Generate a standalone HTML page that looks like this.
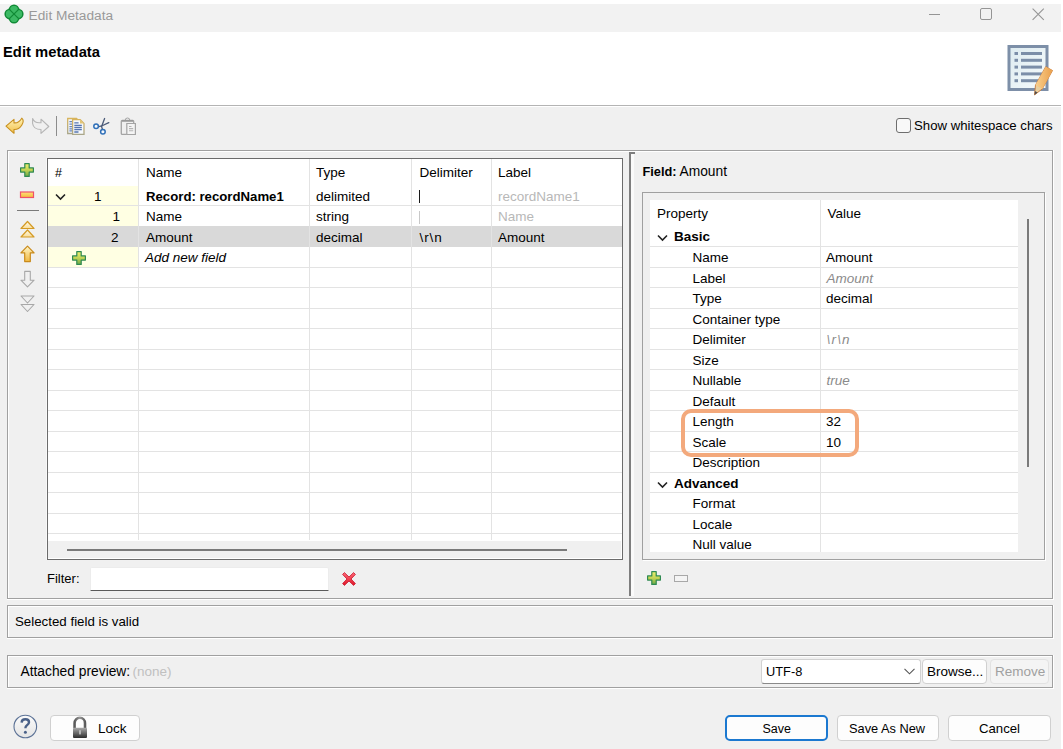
<!DOCTYPE html>
<html><head><meta charset="utf-8">
<style>
*{margin:0;padding:0;box-sizing:border-box}
html,body{width:1063px;height:749px;overflow:hidden;background:#fff;font-family:"Liberation Sans",sans-serif;color:#000}
.a{position:absolute}
.t{position:absolute;white-space:pre;line-height:16px}
svg{position:absolute;overflow:visible}
</style></head><body>
<div class="a" style="left:0px;top:4px;width:1061px;height:28px;background:#f2f2f2"></div><svg style="left:4px;top:4px" width="20" height="20" viewBox="0 0 20 20">
<g stroke="#118a36" stroke-width="1.6" fill="#3cb964"><circle cx="10" cy="5.7" r="4.5"/><circle cx="14.3" cy="10" r="4.5"/><circle cx="10" cy="14.3" r="4.5"/><circle cx="5.7" cy="10" r="4.5"/></g>
<g fill="#3cb964"><circle cx="10" cy="5.7" r="3.7"/><circle cx="14.3" cy="10" r="3.7"/><circle cx="10" cy="14.3" r="3.7"/><circle cx="5.7" cy="10" r="3.7"/><rect x="5.5" y="5.5" width="9" height="9"/></g>
<path d="M4.6 4.6L15.4 15.4M15.4 4.6L4.6 15.4" stroke="#118a36" stroke-width="1.3"/>
</svg><div class="t" style="left:28.6px;top:8px;font-size:13.7px;font-weight:normal;font-style:normal;color:#999;">Edit Metadata</div><div class="a" style="left:929px;top:14px;width:11px;height:1px;background:#959595"></div><div class="a" style="left:980px;top:8px;width:12px;height:12px;border:1.3px solid #959595;border-radius:2px"></div><svg style="left:1032px;top:8px" width="13" height="13" viewBox="0 0 13 13"><path d="M0.6 0.6L11.8 11.8M11.8 0.6L0.6 11.8" stroke="#959595" stroke-width="1.1"/></svg><div class="t" style="left:3px;top:44px;font-size:14.8px;font-weight:bold;font-style:normal;color:#000;">Edit metadata</div><svg style="left:1006px;top:44px" width="50" height="54" viewBox="0 0 50 54">
<defs><linearGradient id="pg" x1="0" y1="0" x2="1" y2="1"><stop offset="0" stop-color="#ddebf0"/><stop offset="1" stop-color="#f6fbfc"/></linearGradient>
<linearGradient id="pc" x1="0" y1="0" x2="1" y2="0"><stop offset="0" stop-color="#f9d08e"/><stop offset="1" stop-color="#eaa04c"/></linearGradient></defs>
<rect x="3" y="2.5" width="38" height="43" fill="url(#pg)" stroke="#7d8fa8" stroke-width="3"/>
<g fill="#7b8ea8">
<rect x="8.5" y="8" width="3.5" height="3"/><rect x="15" y="8" width="21" height="3"/>
<rect x="8.5" y="14.8" width="3.5" height="3"/><rect x="15" y="14.8" width="21" height="3"/>
<rect x="8.5" y="21.6" width="3.5" height="3"/><rect x="15" y="21.6" width="21" height="3"/>
<rect x="8.5" y="28.4" width="3.5" height="3"/><rect x="15" y="28.4" width="21" height="3"/>
<rect x="8.5" y="35.2" width="3.5" height="3"/><rect x="15" y="35.2" width="21" height="3"/>
</g>
<path d="M39.7 22.7L46.5 26.5 36.3 44.9 28.5 50.9 29.5 41.1z" fill="#e9cf9e" stroke="#c8783a" stroke-width="0.9" stroke-linejoin="round"/>
<path d="M39.7 22.7L46.5 26.5 36.3 44.9 29.5 41.1z" fill="url(#pc)"/>
<path d="M28.9 47L31.6 48.5 28.5 50.9z" fill="#505050"/>
</svg><div class="a" style="left:0px;top:105px;width:1061px;height:1px;background:#b4b4b4"></div><div class="a" style="left:0px;top:107px;width:1061px;height:642px;background:#f0f0f0"></div><svg style="left:5px;top:117px" width="20" height="18" viewBox="0 0 20 18">
<defs><linearGradient id="ug" x1="0" y1="0" x2="0" y2="1"><stop offset="0" stop-color="#fff3b8"/><stop offset="1" stop-color="#f2c04a"/></linearGradient></defs>
<path d="M1 9.2L9 2.4 9 5.9 10 5.9C13 5.9 15 4 16.8 1.2 18.4 2.4 18.4 5.4 16.7 8.2 15 10.9 12 12.5 9.6 12.5L9 12.5 9 16.3z" fill="url(#ug)" stroke="#c8901e" stroke-width="1.1" stroke-linejoin="round"/>
</svg><svg style="left:31px;top:117px" width="20" height="18" viewBox="0 0 20 18">
<path d="M1.6 1.5C2.8 4.2 5 5.7 8 5.7L10 5.7 10 2.2 17.8 9.5 10 16.3 10 12.5C6 12.5 2.2 10.5 1.6 6.5z" fill="none" stroke="#b5b5b5" stroke-width="1.1" stroke-linejoin="round"/>
</svg><div class="a" style="left:56px;top:116px;width:1px;height:20px;background:#8c8c8c"></div><svg style="left:66px;top:117px" width="20" height="19" viewBox="0 0 20 19">
<defs><linearGradient id="cb" x1="0" y1="0" x2="0" y2="1"><stop offset="0" stop-color="#d8b45c"/><stop offset="1" stop-color="#a9a68a"/></linearGradient></defs>
<path d="M1.7 1.5H10.5L12 3V16.5H1.7z" fill="#f2f6fc" stroke="url(#cb)" stroke-width="1.3"/>
<g stroke="#6a86bc" stroke-width="1.2"><path d="M3.4 4.6H6.2M3.4 7.2H6.2M3.4 9.6H6.2M3.4 11.8H6.2M3.4 13.8H6.2"/></g>
<path d="M6.6 2.6H14.2L18 6.4V17.4H6.6z" fill="#f6f9fd" stroke="url(#cb)" stroke-width="1.3"/>
<path d="M14 2.8V6.6H17.8z" fill="#e2c474"/>
<g stroke="#5675b0" stroke-width="1.3"><path d="M8.3 5.8H12.6M8.3 8.3H15.8M8.3 10.5H15.8M8.3 12.6H15.8M8.3 15H12.5"/></g>
</svg><svg style="left:92px;top:117px" width="19" height="19" viewBox="0 0 19 19">
<g stroke="#4a5a78" stroke-width="1.3" fill="none" stroke-linecap="round"><path d="M12.6 1.5L9.6 9.6 10.4 12.2"/><path d="M16.8 5.6L9.6 9 6.8 9.6"/></g>
<g stroke="#2f6fb8" stroke-width="1.5" fill="#f4f8fc"><circle cx="4.1" cy="9.3" r="2.3"/><circle cx="10.9" cy="14.8" r="2.3"/></g>
</svg><svg style="left:120px;top:117px" width="18" height="19" viewBox="0 0 18 19">
<g fill="none" stroke="#a4a4a4" stroke-width="1.3">
<path d="M6.7 17.4H2.2Q1.3 17.4 1.3 16.5V4.4Q1.3 3.5 2.2 3.5H12.8Q13.7 3.5 13.7 4.4V6.4"/>
<path d="M5.2 3.2Q5.2 1 7.5 1Q9.8 1 9.8 3.2" stroke-width="1"/>
</g>
<path d="M2 3.9H13" stroke="#999" stroke-width="1.6"/>
<path d="M6.8 6.5H15.4V17.5H6.8z" fill="#f4f4f4" stroke="#a4a4a4" stroke-width="1.2"/>
<path d="M9 9.5H11.5M9 11.6H13.2M9 13.7H13.2" stroke="#b4b4b4" stroke-width="1.1"/>
</svg><div class="a" style="left:896px;top:118px;width:15px;height:15px;border:1.3px solid #6e6e6e;border-radius:3px;background:#f8f8f8"></div><div class="t" style="left:914px;top:118px;font-size:13.2px;font-weight:normal;font-style:normal;color:#000;">Show whitespace chars</div><div class="a" style="left:7px;top:150px;width:1046px;height:1px;background:#a0a0a0"></div><div class="a" style="left:7px;top:598px;width:1046px;height:1px;background:#a0a0a0"></div><div class="a" style="left:7px;top:150px;width:1px;height:449px;background:#a0a0a0"></div><div class="a" style="left:1052px;top:150px;width:1px;height:449px;background:#a0a0a0"></div><div class="a" style="left:8px;top:151px;width:1044px;height:1px;background:#fff"></div><div class="a" style="left:8px;top:151px;width:1px;height:447px;background:#fff"></div><div class="a" style="left:7px;top:599px;width:1047px;height:1px;background:#fff"></div><div class="a" style="left:1053px;top:150px;width:1px;height:450px;background:#fff"></div><svg style="left:20px;top:163px" width="14" height="14" viewBox="0 0 14 14">
<defs><linearGradient id="plg20" x1="0" y1="0" x2="0" y2="1"><stop offset="0" stop-color="#eef070"/><stop offset="0.5" stop-color="#c4d454"/><stop offset="1" stop-color="#6aa848"/></linearGradient></defs>
<path transform="translate(0 0)" d="M4.8 0.6H9.2V4.9H13.4V9.1H9.2V13.4H4.8V9.1H0.6V4.9H4.8z" fill="url(#plg20)" stroke="#2f8a52" stroke-width="1.2" stroke-linejoin="round"/>
</svg><svg style="left:19px;top:191px" width="16" height="8" viewBox="0 0 16 8">
<defs><linearGradient id="mg" x1="0" y1="0" x2="0" y2="1"><stop offset="0" stop-color="#ffe27a"/><stop offset="1" stop-color="#f5b73c"/></linearGradient></defs>
<rect x="1.5" y="1" width="13" height="5.5" fill="url(#mg)" stroke="#f0506a" stroke-width="1.2"/></svg><div class="a" style="left:17px;top:210px;width:22px;height:1px;background:#7a7a7a"></div><svg style="left:20px;top:220px" width="16" height="20" viewBox="0 0 16 20">
<defs><linearGradient id="tg" x1="0" y1="0" x2="0" y2="1"><stop offset="0" stop-color="#fffbe8"/><stop offset="1" stop-color="#f8dc98"/></linearGradient></defs><g transform="translate(-0.5 0)">
<path d="M8 1.5L14.5 8.5H1.5z" fill="url(#tg)" stroke="#d49a24" stroke-width="1.2" stroke-linejoin="round"/><path d="M8 10L14.5 17H1.5z" fill="url(#tg)" stroke="#d49a24" stroke-width="1.2" stroke-linejoin="round"/></g></svg><svg style="left:20px;top:245px" width="16" height="18" viewBox="0 0 16 18">
<defs><linearGradient id="ag" x1="0" y1="0" x2="0" y2="1"><stop offset="0" stop-color="#fff6c8"/><stop offset="1" stop-color="#f0b840"/></linearGradient></defs><g transform="translate(-0.5 0)">
<path d="M8 1.2L14.6 7.8H10.8V16.6H5.2V7.8H1.4z" fill="url(#ag)" stroke="#c98a1a" stroke-width="1.2" stroke-linejoin="round"/></g></svg><svg style="left:20px;top:270px" width="16" height="18" viewBox="0 0 16 18"><g transform="translate(-0.5 0)">
<path d="M8 16.8L14.6 10.2H10.8V1.4H5.2V10.2H1.4z" fill="none" stroke="#a8a8a8" stroke-width="1.1" stroke-linejoin="round"/></g></svg><svg style="left:20px;top:294px" width="16" height="20" viewBox="0 0 16 20"><g transform="translate(-0.5 0)">
<path d="M8 9L14.5 2H1.5z M8 17.5L14.5 10.5H1.5z" fill="none" stroke="#a8a8a8" stroke-width="1.1" stroke-linejoin="round"/></g></svg><div class="a" style="left:47px;top:158px;width:576px;height:402px;background:#fff;border:1px solid #6b6b6b;box-shadow:-1px 0 0 #f8f8f8"></div><div class="a" style="left:48px;top:541px;width:574px;height:17px;background:#f0f0f0"></div><div class="a" style="left:67px;top:549px;width:500px;height:2px;background:#7a7a7a"></div><div class="a" style="left:48px;top:558px;width:574px;height:1px;background:#fff"></div><div class="a" style="left:621px;top:541px;width:1px;height:18px;background:#fff"></div><div class="a" style="left:48px;top:186px;width:90px;height:19px;background:#ffffe3"></div><div class="a" style="left:48px;top:206px;width:90px;height:20px;background:#ffffe3"></div><div class="a" style="left:48px;top:247px;width:90px;height:20px;background:#ffffe3"></div><div class="a" style="left:48px;top:226px;width:574px;height:21px;background:#d9d9d9"></div><div class="a" style="left:48px;top:205px;width:574px;height:1px;background:#e3e3e3"></div><div class="a" style="left:48px;top:267px;width:574px;height:1px;background:#e3e3e3"></div><div class="a" style="left:48px;top:287px;width:574px;height:1px;background:#e3e3e3"></div><div class="a" style="left:48px;top:308px;width:574px;height:1px;background:#e3e3e3"></div><div class="a" style="left:48px;top:328px;width:574px;height:1px;background:#e3e3e3"></div><div class="a" style="left:48px;top:349px;width:574px;height:1px;background:#e3e3e3"></div><div class="a" style="left:48px;top:369px;width:574px;height:1px;background:#e3e3e3"></div><div class="a" style="left:48px;top:390px;width:574px;height:1px;background:#e3e3e3"></div><div class="a" style="left:48px;top:410px;width:574px;height:1px;background:#e3e3e3"></div><div class="a" style="left:48px;top:431px;width:574px;height:1px;background:#e3e3e3"></div><div class="a" style="left:48px;top:451px;width:574px;height:1px;background:#e3e3e3"></div><div class="a" style="left:48px;top:472px;width:574px;height:1px;background:#e3e3e3"></div><div class="a" style="left:48px;top:492px;width:574px;height:1px;background:#e3e3e3"></div><div class="a" style="left:48px;top:513px;width:574px;height:1px;background:#e3e3e3"></div><div class="a" style="left:48px;top:533px;width:574px;height:1px;background:#e3e3e3"></div><div class="a" style="left:138px;top:159px;width:1px;height:381px;background:#e3e3e3"></div><div class="a" style="left:309px;top:159px;width:1px;height:381px;background:#e3e3e3"></div><div class="a" style="left:411px;top:159px;width:1px;height:381px;background:#e3e3e3"></div><div class="a" style="left:491px;top:159px;width:1px;height:381px;background:#e3e3e3"></div><div class="t" style="left:55px;top:165px;font-size:12.5px;font-weight:normal;font-style:normal;color:#000;">#</div><div class="t" style="left:146px;top:165px;font-size:13.5px;font-weight:normal;font-style:normal;color:#000;">Name</div><div class="t" style="left:316px;top:165px;font-size:13.5px;font-weight:normal;font-style:normal;color:#000;">Type</div><div class="t" style="left:419.5px;top:165px;font-size:13.5px;font-weight:normal;font-style:normal;color:#000;">Delimiter</div><div class="t" style="left:498px;top:165px;font-size:13.5px;font-weight:normal;font-style:normal;color:#000;">Label</div><svg style="left:55px;top:193px" width="11" height="8" viewBox="0 0 11 8"><path d="M1 1.5L5.5 6 10 1.5" fill="none" stroke="#222" stroke-width="1.6"/></svg><div class="t" style="left:94px;top:189px;font-size:13.5px;font-weight:normal;font-style:normal;color:#000;">1</div><div class="t" style="left:146px;top:189px;font-size:13.2px;font-weight:bold;font-style:normal;color:#000;">Record: recordName1</div><div class="t" style="left:316px;top:189px;font-size:13.5px;font-weight:normal;font-style:normal;color:#000;">delimited</div><div class="a" style="left:419px;top:190px;width:1.3px;height:13px;background:#1a1a1a"></div><div class="t" style="left:498px;top:189px;font-size:13.5px;font-weight:normal;font-style:normal;color:#b8b8b8;">recordName1</div><div class="t" style="left:112.5px;top:209px;font-size:13.5px;font-weight:normal;font-style:normal;color:#000;">1</div><div class="t" style="left:146px;top:209px;font-size:13.5px;font-weight:normal;font-style:normal;color:#000;">Name</div><div class="t" style="left:316px;top:209px;font-size:13.5px;font-weight:normal;font-style:normal;color:#000;">string</div><div class="a" style="left:419px;top:211px;width:1px;height:13px;background:#c8c8c8"></div><div class="t" style="left:498px;top:209px;font-size:13.5px;font-weight:normal;font-style:normal;color:#b8b8b8;">Name</div><div class="t" style="left:111px;top:230px;font-size:13.5px;font-weight:normal;font-style:normal;color:#000;">2</div><div class="t" style="left:146px;top:230px;font-size:13.5px;font-weight:normal;font-style:normal;color:#000;">Amount</div><div class="t" style="left:316px;top:230px;font-size:13.5px;font-weight:normal;font-style:normal;color:#000;">decimal</div><div class="t" style="left:419.5px;top:230px;font-size:13.5px;font-weight:normal;font-style:normal;color:#000;letter-spacing:0.9px">\r\n</div><div class="t" style="left:498px;top:230px;font-size:13.5px;font-weight:normal;font-style:normal;color:#000;">Amount</div><svg style="left:72px;top:251px" width="14" height="14" viewBox="0 0 14 14">
<defs><linearGradient id="plg72" x1="0" y1="0" x2="0" y2="1"><stop offset="0" stop-color="#eef070"/><stop offset="0.5" stop-color="#c4d454"/><stop offset="1" stop-color="#6aa848"/></linearGradient></defs>
<path transform="translate(0 0)" d="M4.8 0.6H9.2V4.9H13.4V9.1H9.2V13.4H4.8V9.1H0.6V4.9H4.8z" fill="url(#plg72)" stroke="#2f8a52" stroke-width="1.2" stroke-linejoin="round"/>
</svg><div class="t" style="left:145px;top:250px;font-size:13.5px;font-weight:normal;font-style:italic;color:#000;">Add new field</div><div class="t" style="left:47px;top:571px;font-size:13px;font-weight:normal;font-style:normal;color:#000;">Filter:</div><div class="a" style="left:90px;top:567px;width:239px;height:24px;background:#fff;border:1px solid #ececec;border-bottom:1px solid #5a5a5a;border-radius:2px 2px 0 0"></div><svg style="left:341px;top:571px" width="16" height="16" viewBox="0 0 16 16">
<defs><linearGradient id="xg" x1="0" y1="0" x2="0" y2="1"><stop offset="0" stop-color="#ff6a78"/><stop offset="1" stop-color="#e01828"/></linearGradient></defs>
<path d="M3.4 1.6L8 6 12.6 1.6 14.4 3.4 10 8 14.4 12.6 12.6 14.4 8 10 3.4 14.4 1.6 12.6 6 8 1.6 3.4z" fill="url(#xg)" stroke="#c8102a" stroke-width="0.8" stroke-linejoin="round"/></svg><div class="a" style="left:629px;top:152px;width:2px;height:444px;background:#7e7e7e"></div><div class="a" style="left:629px;top:152px;width:6px;height:2px;background:#7e7e7e"></div><div class="a" style="left:631px;top:154px;width:3px;height:442px;background:#fafafa"></div><div class="t" style="left:642.5px;top:164px;font-size:12.8px;font-weight:bold;font-style:normal;color:#000;">Field:</div><div class="t" style="left:679.5px;top:164px;font-size:13.8px;font-weight:normal;font-style:normal;color:#000;">Amount</div><div class="a" style="left:642px;top:192px;width:403px;height:368px;border:1px solid #a0a0a0;box-shadow:1px 1px 0 #fff"></div><div class="a" style="left:650px;top:200px;width:368px;height:352px;background:#fff"></div><div class="a" style="left:1027px;top:219px;width:2px;height:248px;background:#7a7a7a"></div><div class="a" style="left:820px;top:200px;width:1px;height:352px;background:#e3e3e3"></div><div class="a" style="left:650px;top:246px;width:368px;height:1px;background:#e3e3e3"></div><div class="a" style="left:650px;top:267px;width:368px;height:1px;background:#e3e3e3"></div><div class="a" style="left:650px;top:287px;width:368px;height:1px;background:#e3e3e3"></div><div class="a" style="left:650px;top:308px;width:368px;height:1px;background:#e3e3e3"></div><div class="a" style="left:650px;top:328px;width:368px;height:1px;background:#e3e3e3"></div><div class="a" style="left:650px;top:349px;width:368px;height:1px;background:#e3e3e3"></div><div class="a" style="left:650px;top:369px;width:368px;height:1px;background:#e3e3e3"></div><div class="a" style="left:650px;top:390px;width:368px;height:1px;background:#e3e3e3"></div><div class="a" style="left:650px;top:410px;width:368px;height:1px;background:#e3e3e3"></div><div class="a" style="left:650px;top:431px;width:368px;height:1px;background:#e3e3e3"></div><div class="a" style="left:650px;top:451px;width:368px;height:1px;background:#e3e3e3"></div><div class="a" style="left:650px;top:472px;width:368px;height:1px;background:#e3e3e3"></div><div class="a" style="left:650px;top:492px;width:368px;height:1px;background:#e3e3e3"></div><div class="a" style="left:650px;top:513px;width:368px;height:1px;background:#e3e3e3"></div><div class="a" style="left:650px;top:533px;width:368px;height:1px;background:#e3e3e3"></div><div class="t" style="left:657px;top:206px;font-size:13.5px;font-weight:normal;font-style:normal;color:#000;">Property</div><div class="t" style="left:827.5px;top:206px;font-size:13.5px;font-weight:normal;font-style:normal;color:#000;">Value</div><svg style="left:657px;top:234px" width="11" height="8" viewBox="0 0 11 8"><path d="M1 1.5L5.5 6 10 1.5" fill="none" stroke="#222" stroke-width="1.6"/></svg><div class="t" style="left:674px;top:229px;font-size:13.5px;font-weight:bold;font-style:normal;color:#000;">Basic</div><div class="t" style="left:692.5px;top:250px;font-size:13.5px;font-weight:normal;font-style:normal;color:#000;">Name</div><div class="t" style="left:826px;top:250px;font-size:13.5px;font-weight:normal;font-style:normal;color:#000;">Amount</div><div class="t" style="left:692.5px;top:271px;font-size:13.5px;font-weight:normal;font-style:normal;color:#000;">Label</div><div class="t" style="left:826.5px;top:271px;font-size:13.5px;font-weight:normal;font-style:italic;color:#8a8a8a;">Amount</div><div class="t" style="left:692.5px;top:291px;font-size:13.5px;font-weight:normal;font-style:normal;color:#000;">Type</div><div class="t" style="left:826px;top:291px;font-size:13.5px;font-weight:normal;font-style:normal;color:#000;">decimal</div><div class="t" style="left:692.5px;top:312px;font-size:13.5px;font-weight:normal;font-style:normal;color:#000;">Container type</div><div class="t" style="left:692.5px;top:332px;font-size:13.5px;font-weight:normal;font-style:normal;color:#000;">Delimiter</div><div class="t" style="left:826.5px;top:332px;font-size:13.5px;font-weight:normal;font-style:italic;color:#8a8a8a;letter-spacing:1.2px">\r\n</div><div class="t" style="left:692.5px;top:353px;font-size:13.5px;font-weight:normal;font-style:normal;color:#000;">Size</div><div class="t" style="left:692.5px;top:373px;font-size:13.5px;font-weight:normal;font-style:normal;color:#000;">Nullable</div><div class="t" style="left:826.5px;top:373px;font-size:13.5px;font-weight:normal;font-style:italic;color:#8a8a8a;">true</div><div class="t" style="left:692.5px;top:394px;font-size:13.5px;font-weight:normal;font-style:normal;color:#000;">Default</div><div class="t" style="left:692.5px;top:414px;font-size:13.5px;font-weight:normal;font-style:normal;color:#000;">Length</div><div class="t" style="left:826px;top:414px;font-size:13.5px;font-weight:normal;font-style:normal;color:#000;">32</div><div class="t" style="left:692.5px;top:435px;font-size:13.5px;font-weight:normal;font-style:normal;color:#000;">Scale</div><div class="t" style="left:826px;top:435px;font-size:13.5px;font-weight:normal;font-style:normal;color:#000;">10</div><div class="t" style="left:692.5px;top:455px;font-size:13.5px;font-weight:normal;font-style:normal;color:#000;">Description</div><svg style="left:657px;top:481px" width="11" height="8" viewBox="0 0 11 8"><path d="M1 1.5L5.5 6 10 1.5" fill="none" stroke="#222" stroke-width="1.6"/></svg><div class="t" style="left:674px;top:476px;font-size:13.5px;font-weight:bold;font-style:normal;color:#000;">Advanced</div><div class="t" style="left:692.5px;top:496px;font-size:13.5px;font-weight:normal;font-style:normal;color:#000;">Format</div><div class="t" style="left:692.5px;top:517px;font-size:13.5px;font-weight:normal;font-style:normal;color:#000;">Locale</div><div class="t" style="left:692.5px;top:537px;font-size:13.5px;font-weight:normal;font-style:normal;color:#000;">Null value</div><div class="a" style="left:681px;top:409px;width:178px;height:48px;border:4px solid #f3a97c;border-radius:10px"></div><svg style="left:647px;top:571px" width="14" height="14" viewBox="0 0 14 14">
<defs><linearGradient id="plg647" x1="0" y1="0" x2="0" y2="1"><stop offset="0" stop-color="#eef070"/><stop offset="0.5" stop-color="#c4d454"/><stop offset="1" stop-color="#6aa848"/></linearGradient></defs>
<path transform="translate(0 0)" d="M4.8 0.6H9.2V4.9H13.4V9.1H9.2V13.4H4.8V9.1H0.6V4.9H4.8z" fill="url(#plg647)" stroke="#2f8a52" stroke-width="1.2" stroke-linejoin="round"/>
</svg><div class="a" style="left:674px;top:575px;width:14px;height:7px;border:1px solid #a8a8a8;background:#f4f4f4"></div><div class="a" style="left:7px;top:605px;width:1046px;height:1px;background:#a0a0a0"></div><div class="a" style="left:7px;top:637px;width:1046px;height:1px;background:#a0a0a0"></div><div class="a" style="left:7px;top:605px;width:1px;height:33px;background:#a0a0a0"></div><div class="a" style="left:1052px;top:605px;width:1px;height:33px;background:#a0a0a0"></div><div class="a" style="left:8px;top:606px;width:1044px;height:1px;background:#fff"></div><div class="a" style="left:8px;top:606px;width:1px;height:31px;background:#fff"></div><div class="a" style="left:7px;top:638px;width:1047px;height:1px;background:#fff"></div><div class="a" style="left:1053px;top:605px;width:1px;height:34px;background:#fff"></div><div class="t" style="left:15px;top:614px;font-size:13.3px;font-weight:normal;font-style:normal;color:#000;">Selected field is valid</div><div class="a" style="left:7px;top:655px;width:1046px;height:1px;background:#a0a0a0"></div><div class="a" style="left:7px;top:687px;width:1046px;height:1px;background:#a0a0a0"></div><div class="a" style="left:7px;top:655px;width:1px;height:33px;background:#a0a0a0"></div><div class="a" style="left:1052px;top:655px;width:1px;height:33px;background:#a0a0a0"></div><div class="a" style="left:8px;top:656px;width:1044px;height:1px;background:#fff"></div><div class="a" style="left:8px;top:656px;width:1px;height:31px;background:#fff"></div><div class="a" style="left:7px;top:688px;width:1047px;height:1px;background:#fff"></div><div class="a" style="left:1053px;top:655px;width:1px;height:34px;background:#fff"></div><div class="t" style="left:20.5px;top:664px;font-size:13.8px;font-weight:normal;font-style:normal;color:#000;">Attached preview:</div><div class="t" style="left:132.5px;top:664px;font-size:13.5px;font-weight:normal;font-style:normal;color:#c0c0c0;">(none)</div><div class="a" style="left:761px;top:659px;width:160px;height:25px;background:#fff;border:1px solid #d2d2d2;border-bottom-color:#8a8a8a;border-radius:3px"></div><div class="t" style="left:766px;top:664px;font-size:12.8px;font-weight:normal;font-style:normal;color:#000;">UTF-8</div><svg style="left:904px;top:668px" width="11" height="7" viewBox="0 0 11 7"><path d="M0.5 0.8L5.5 5.8 10.5 0.8" fill="none" stroke="#555" stroke-width="1.1"/></svg><div class="a" style="left:922px;top:659px;width:65px;height:25px;background:#fdfdfd;border:1px solid #d0d0d0;border-radius:4px"></div><div class="t" style="left:927px;top:664px;font-size:13.5px;font-weight:normal;font-style:normal;color:#000;">Browse...</div><div class="a" style="left:990px;top:659px;width:59px;height:25px;background:#f4f4f4;border:1px solid #e2e2e2;border-radius:4px"></div><div class="t" style="left:995px;top:664px;font-size:13.5px;font-weight:normal;font-style:normal;color:#a0a0a0;">Remove</div><svg style="left:13px;top:714px" width="25" height="25" viewBox="0 0 25 25">
<defs><linearGradient id="hg" x1="0" y1="0" x2="0" y2="1"><stop offset="0" stop-color="#fbfbfb"/><stop offset="1" stop-color="#e4e4e4"/></linearGradient></defs>
<circle cx="12.3" cy="12.5" r="11.3" fill="url(#hg)" stroke="#5c7296" stroke-width="1.1"/>
<path d="M8.6 8.6Q8.8 5.3 12.4 5.3Q16 5.3 16 8.3Q16 10 14 11.3Q12.4 12.3 12.4 14.3" fill="none" stroke="#4a6188" stroke-width="2.4"/>
<circle cx="12.4" cy="18.2" r="1.5" fill="#4a6188"/></svg><div class="a" style="left:50px;top:715px;width:90px;height:26px;background:#fdfdfd;border:1px solid #d0d0d0;border-radius:4px"></div><svg style="left:71px;top:716px" width="18" height="23" viewBox="0 0 18 23">
<defs><linearGradient id="lk" x1="0" y1="0" x2="0" y2="1"><stop offset="0" stop-color="#a8a8a8"/><stop offset="1" stop-color="#2c2c2c"/></linearGradient>
<linearGradient id="ls" x1="0" y1="0" x2="1" y2="0"><stop offset="0" stop-color="#5a5a5a"/><stop offset="0.5" stop-color="#9a9a9a"/><stop offset="1" stop-color="#5a5a5a"/></linearGradient></defs>
<path d="M3.6 12V7.2A5.2 5.4 0 0 1 14 7.2V12" fill="none" stroke="url(#ls)" stroke-width="2.6"/>
<rect x="2" y="11.8" width="14" height="10.2" rx="1" fill="url(#lk)"/>
<rect x="8.2" y="14.2" width="1.6" height="4.2" fill="#c8c8c8"/></svg><div class="t" style="left:98px;top:721px;font-size:13.5px;font-weight:normal;font-style:normal;color:#000;">Lock</div><div class="a" style="left:725px;top:715px;width:103px;height:26px;background:#fdfdfd;border:2px solid #1b78d0;border-radius:5px"></div><div class="t" style="left:762.5px;top:721px;font-size:12.5px;font-weight:normal;font-style:normal;color:#000;">Save</div><div class="a" style="left:837px;top:715px;width:102px;height:26px;background:#fdfdfd;border:1px solid #d0d0d0;border-radius:4px"></div><div class="t" style="left:849px;top:721px;font-size:12.8px;font-weight:normal;font-style:normal;color:#000;">Save As New</div><div class="a" style="left:948px;top:715px;width:103px;height:26px;background:#fdfdfd;border:1px solid #d0d0d0;border-radius:4px"></div><div class="t" style="left:979px;top:721px;font-size:13.2px;font-weight:normal;font-style:normal;color:#000;">Cancel</div>
</body></html>
